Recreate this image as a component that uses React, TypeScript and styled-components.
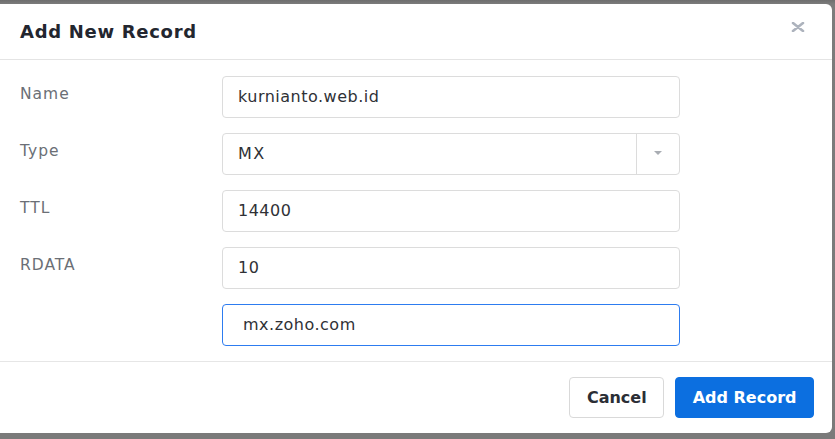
import styled, { createGlobalStyle } from "styled-components";

const GlobalStyle = createGlobalStyle`
  html, body {
    margin: 0;
    padding: 0;
    background: #7a7a7a;
    font-family: "DejaVu Sans", "Liberation Sans", sans-serif;
  }
  * { box-sizing: border-box; }
`;

const Backdrop = styled.div`
  width: 835px;
  height: 439px;
  padding-top: 4px;
  background: linear-gradient(#6e6e6e, #7c7c7c 4px, #7a7a7a);
  overflow: hidden;
`;

const Modal = styled.div`
  width: 832px;
  height: 429px;
  background: #fff;
  border-radius: 0 6px 6px 0;
  display: flex;
  flex-direction: column;
`;

const Header = styled.div`
  height: 56px;
  padding: 0 20px;
  display: flex;
  align-items: center;
  justify-content: space-between;
  border-bottom: 1px solid #e4e4e4;
`;

const Title = styled.h2`
  margin: 0;
  font-size: 18px;
  font-weight: 700;
  letter-spacing: 0.7px;
  color: #23262f;
`;

const Close = styled.button`
  border: 0;
  background: none;
  padding: 0;
  margin-right: 6px;
  margin-top: -8px;
  width: 16px;
  height: 12px;
  display: flex;
  align-items: center;
  justify-content: center;
  cursor: pointer;
`;

const Body = styled.div`
  flex: 1;
  padding: 16px 0 15px 20px;
  display: flex;
  flex-direction: column;
  gap: 15px;
  border-bottom: 1px solid #e6e6e6;
`;

const Row = styled.div`
  display: grid;
  grid-template-columns: 202px 458px;
  align-items: start;
`;

const Label = styled.label`
  padding-top: 9px;
  font-size: 15.5px;
  letter-spacing: 1px;
  color: #6b6f76;
`;

const TextInput = styled.input<{ $focused?: boolean }>`
  width: 100%;
  height: 42px;
  padding: 0 ${(p) => (p.$focused ? "20px" : "15px")};
  border: 1px solid ${(p) => (p.$focused ? "#2d7cf0" : "#dcdcdc")};
  border-radius: 4px;
  font-family: "DejaVu Sans", "Liberation Sans", sans-serif;
  font-size: 16px;
  letter-spacing: 0.5px;
  color: #2f3136;
  outline: none;
`;

const Select = styled.div`
  height: 42px;
  display: flex;
  border: 1px solid #dcdcdc;
  border-radius: 4px;
`;

const SelectValue = styled.div`
  flex: 1;
  display: flex;
  align-items: center;
  padding-left: 15px;
  font-size: 16px;
  letter-spacing: 1.5px;
  color: #2f3136;
  border-right: 1px solid #dcdcdc;
`;

const SelectArrow = styled.div`
  width: 42px;
  display: flex;
  align-items: center;
  justify-content: center;
`;

const Footer = styled.div`
  height: 72px;
  padding: 0 18px;
  display: flex;
  align-items: center;
  justify-content: flex-end;
  gap: 11px;
`;

const Button = styled.button<{ $primary?: boolean }>`
  height: 41px;
  padding: 0 16.5px;
  border-radius: 4px;
  border: 1px solid ${(p) => (p.$primary ? "#0c6fe0" : "#d9d9d9")};
  background: ${(p) => (p.$primary ? "#0c6fe0" : "#fff")};
  color: ${(p) => (p.$primary ? "#fff" : "#2b2e35")};
  font-family: "DejaVu Sans", "Liberation Sans", sans-serif;
  font-size: 16px;
  font-weight: 700;
  cursor: pointer;
`;

export default function App() {
  return (
    <>
      <GlobalStyle />
      <Backdrop>
        <Modal>
          <Header>
            <Title>Add New Record</Title>
            <Close aria-label="Close">
              <svg width="14" height="10" viewBox="0 0 14 10">
                <path d="M2 1 L12 9 M12 1 L2 9" stroke="#adb3bd" strokeWidth="2.6" strokeLinecap="round" />
              </svg>
            </Close>
          </Header>
          <Body>
            <Row>
              <Label>Name</Label>
              <TextInput defaultValue="kurnianto.web.id" />
            </Row>
            <Row>
              <Label>Type</Label>
              <Select>
                <SelectValue>MX</SelectValue>
                <SelectArrow>
                  <svg width="8" height="5" viewBox="0 0 8 5">
                    <path d="M0 0 H8 L4 4 Z" fill="#a9adb3" />
                  </svg>
                </SelectArrow>
              </Select>
            </Row>
            <Row>
              <Label>TTL</Label>
              <TextInput defaultValue="14400" />
            </Row>
            <Row>
              <Label>RDATA</Label>
              <TextInput defaultValue="10" />
            </Row>
            <Row>
              <Label />
              <TextInput $focused defaultValue="mx.zoho.com" />
            </Row>
          </Body>
          <Footer>
            <Button>Cancel</Button>
            <Button $primary>Add Record</Button>
          </Footer>
        </Modal>
      </Backdrop>
    </>
  );
}
